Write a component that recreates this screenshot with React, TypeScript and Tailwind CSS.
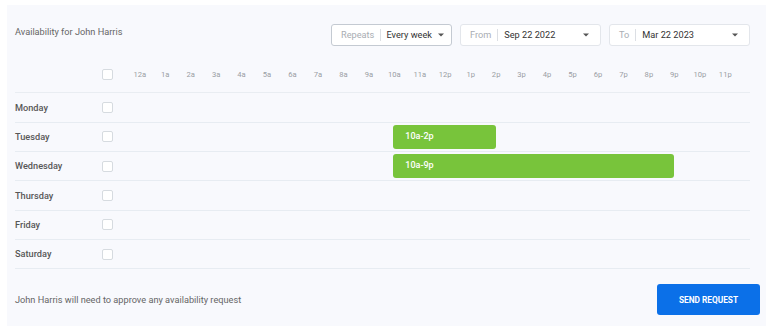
import React from "react";

const hours = [
  "12a", "1a", "2a", "3a", "4a", "5a", "6a", "7a", "8a", "9a", "10a", "11a",
  "12p", "1p", "2p", "3p", "4p", "5p", "6p", "7p", "8p", "9p", "10p", "11p",
];

type Day = { name: string; slot?: { label: string; cls: string } };

// bars run from the middle of one hour column to the middle of another (48 half columns)
const days: Day[] = [
  { name: "Monday" },
  { name: "Tuesday", slot: { label: "10a-2p", cls: "col-start-22 col-end-30" } },
  { name: "Wednesday", slot: { label: "10a-9p", cls: "col-start-22 col-end-44" } },
  { name: "Thursday" },
  { name: "Friday" },
  { name: "Saturday" },
];

function Caret() {
  return (
    <svg width="6" height="4" viewBox="0 0 6 4" className="shrink-0 ml-[6px]">
      <path d="M0 0.5h6L3 3.5z" fill="#555" />
    </svg>
  );
}

function Select({
  label,
  value,
  width,
  strong,
}: {
  label: string;
  value: string;
  width: string;
  strong?: boolean;
}) {
  return (
    <div
      className={`flex items-center h-[22px] rounded-[3px] border bg-white pl-[9px] whitespace-nowrap ${width} ${
        strong ? "border-[#c4cad2] pr-[7px]" : "border-[#e3e6eb] pr-[11px]"
      }`}
    >
      <span className="text-[9.2px] text-[#a9adb3]">{label}</span>
      <span className="mx-[6px] h-[12px] w-px bg-[#dcdfe4]" />
      <span className="text-[9.2px] text-[#333]">{value}</span>
      <span className="flex-1" />
      <Caret />
    </div>
  );
}

function Checkbox() {
  return <div className="w-[11px] h-[11px] shrink-0 rounded-[2px] border border-[#d6dbe0] bg-white" />;
}

export default function App() {
  return (
    <div className="w-[770px] h-[329px] bg-white pt-[5px] pl-[7px] pr-[4px] font-['Roboto',sans-serif]">
      <div className="h-[321px] bg-[#f8f9fd] pl-[8px] pr-[6px] flex flex-col">
        {/* Top bar */}
        <div className="flex items-start justify-between pt-[19px] pr-[10px]">
          <h1 className="mt-[1px] text-[9.2px] text-[#666]">Availability for John Harris</h1>
          <div className="flex gap-[8px]">
            <Select label="Repeats" value="Every week" width="w-[121px]" strong />
            <Select label="From" value="Sep 22 2022" width="w-[141px]" />
            <Select label="To" value="Mar 22 2023" width="w-[141px]" />
          </div>
        </div>

        {/* Grid */}
        <div className="mr-[10px]">
          <div className="mt-[11px] h-[36.3px] flex items-center border-b border-[#e9edf2]">
            <div className="w-[87px]" />
            <Checkbox />
            <div className="ml-[14px] w-[611px] grid grid-cols-24">
              {hours.map((h) => (
                <span key={h} className="text-center text-[7.6px] text-[#9a9ea4]">
                  {h}
                </span>
              ))}
            </div>
          </div>
          {days.map((d) => (
            <div key={d.name} className="h-[29.33px] flex items-center border-b border-[#e7ecf2]">
              <div className="w-[87px] text-[9.2px] font-medium text-[#575757]">{d.name}</div>
              <Checkbox />
              <div className="ml-[14px] w-[611px] grid grid-cols-48">
                {d.slot && (
                  <div
                    className={`${d.slot.cls} -ml-px h-[24.5px] flex items-center rounded-[3px] bg-[#78c43b] pl-[12px] text-[9px] font-medium text-white`}
                  >
                    {d.slot.label}
                  </div>
                )}
              </div>
            </div>
          ))}
        </div>

        {/* Footer */}
        <div className="flex items-center justify-between pt-[15px]">
          <p className="text-[9.2px] text-[#666]">John Harris will need to approve any availability request</p>
          <button className="w-[103px] h-[31px] rounded-[3px] bg-[#0b70e8] text-[8.3px] font-bold text-white">
            SEND REQUEST
          </button>
        </div>
      </div>
    </div>
  );
}
